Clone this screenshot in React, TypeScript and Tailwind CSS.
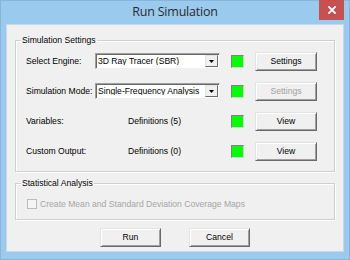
import React from 'react';

const body = { fontFamily: '"Liberation Sans", Arial, sans-serif' };

const ClassicButton: React.FC<{ label: string; disabled?: boolean; className?: string }> = ({ label, disabled, className }) => (
    <div
        className={`h-[19px] flex items-center justify-center bg-[#f0f0f0] border border-t-[#e3e3e3] border-l-[#e3e3e3] border-r-[#696969] border-b-[#696969] shadow-[inset_1px_1px_0_#fff,inset_-1px_-1px_0_#a0a0a0] text-[8.6px] leading-none ${disabled ? 'text-[#a0a0a0]' : 'text-black'} ${className ?? ''}`}
    >
        {label}
    </div>
);

const Combo: React.FC<{ value: string }> = ({ value }) => (
    <div className="w-[125px] h-[16px] flex items-center bg-white border border-t-[#a0a0a0] border-l-[#a0a0a0] border-r-[#f0f0f0] border-b-[#f0f0f0] shadow-[inset_1px_1px_0_#696969]">
        <span className="flex-1 pl-[2px] text-[8.6px] leading-none text-black whitespace-nowrap overflow-hidden">{value}</span>
        <div className="w-[13px] h-[12px] mr-[1px] flex items-center justify-center bg-[#f0f0f0] border border-t-[#e3e3e3] border-l-[#e3e3e3] border-r-[#696969] border-b-[#696969]">
            <svg width="5" height="3" viewBox="0 0 5 3">
                <path d="M0 0h5L2.5 3z" fill="#000" />
            </svg>
        </div>
    </div>
);

const Status = () => (
    <div className="w-[13px] h-[13px] bg-[#00ff00] border border-t-[#808080] border-l-[#808080] border-r-[#d4d4d4] border-b-[#d4d4d4]" />
);

const Row: React.FC<{ label: string; children: React.ReactNode; button: string; disabled?: boolean }> = ({ label, children, button, disabled }) => (
    <div className="h-[30px] flex items-center pl-[10px]">
        <span className="w-[69px] text-[8.6px] leading-none text-black whitespace-nowrap">{label}</span>
        <div className="w-[125px] flex items-center">{children}</div>
        <div className="ml-[11px]">
            <Status />
        </div>
        <ClassicButton label={button} disabled={disabled} className="ml-[11px] w-[62px]" />
    </div>
);

export default function App() {
    return (
        <div className="w-[350px] h-[260px] flex flex-col bg-[#9bcaef] border border-[#86b5de] px-[5px] pb-[7px]" style={body}>
            {/* Title bar */}
            <div className="relative h-[23px] flex items-center justify-center">
                <span
                    className="text-[12.5px] text-[#2a2a2a] tracking-[-0.2px] pb-[1px]"
                    style={{ fontFamily: '"Open Sans", "Noto Sans", sans-serif' }}
                >
                    Run Simulation
                </span>
                <div className="absolute right-[0px] top-[-1px] w-[25px] h-[20px] bg-[#c75050] flex items-center justify-center">
                    <svg width="8" height="8" viewBox="0 0 8 8">
                        <path d="M1 1L7 7M7 1L1 7" stroke="#fff" strokeWidth="1.8" strokeLinecap="square" />
                    </svg>
                </div>
            </div>

            {/* Client area */}
            <div className="flex-1 flex flex-col bg-[#f0f0f0] border border-[#c6d9ea] px-[8px] pt-[9px]">
                <fieldset className="border border-[#cfcfcf] shadow-[inset_1px_1px_0_#fff,1px_1px_0_#fff] pb-[5px]">
                    <legend className="ml-[5px] px-[1px] text-[8.6px] leading-[12px] text-black">Simulation Settings</legend>
                    <Row label="Select Engine:" button="Settings">
                        <Combo value="3D Ray Tracer (SBR)" />
                    </Row>
                    <Row label="Simulation Mode:" button="Settings" disabled>
                        <Combo value="Single-Frequency Analysis" />
                    </Row>
                    <Row label="Variables:" button="View">
                        <span className="pl-[33px] text-[8.6px] leading-none text-black">Definitions (5)</span>
                    </Row>
                    <Row label="Custom Output:" button="View">
                        <span className="pl-[33px] text-[8.6px] leading-none text-black">Definitions (0)</span>
                    </Row>
                </fieldset>

                <fieldset className="mt-[5px] border border-[#cfcfcf] shadow-[inset_1px_1px_0_#fff,1px_1px_0_#fff] pt-[10px] pb-[10px]">
                    <legend className="ml-[5px] px-[1px] text-[8.6px] leading-[12px] text-black">Statistical Analysis</legend>
                    <div className="h-[10px] flex items-center pl-[11px] gap-[3px]">
                        <div className="w-[10px] h-[10px] border border-[#bcbcbc] bg-[#f4f4f4]" />
                        <span className="text-[8.6px] leading-none text-[#a6a6a6] whitespace-nowrap">
                            Create Mean and Standard Deviation Coverage Maps
                        </span>
                    </div>
                </fieldset>

                <div className="mt-[8px] flex justify-center gap-[28px]">
                    <ClassicButton label="Run" className="w-[61px]" />
                    <ClassicButton label="Cancel" className="w-[61px]" />
                </div>
            </div>
        </div>
    );
}
